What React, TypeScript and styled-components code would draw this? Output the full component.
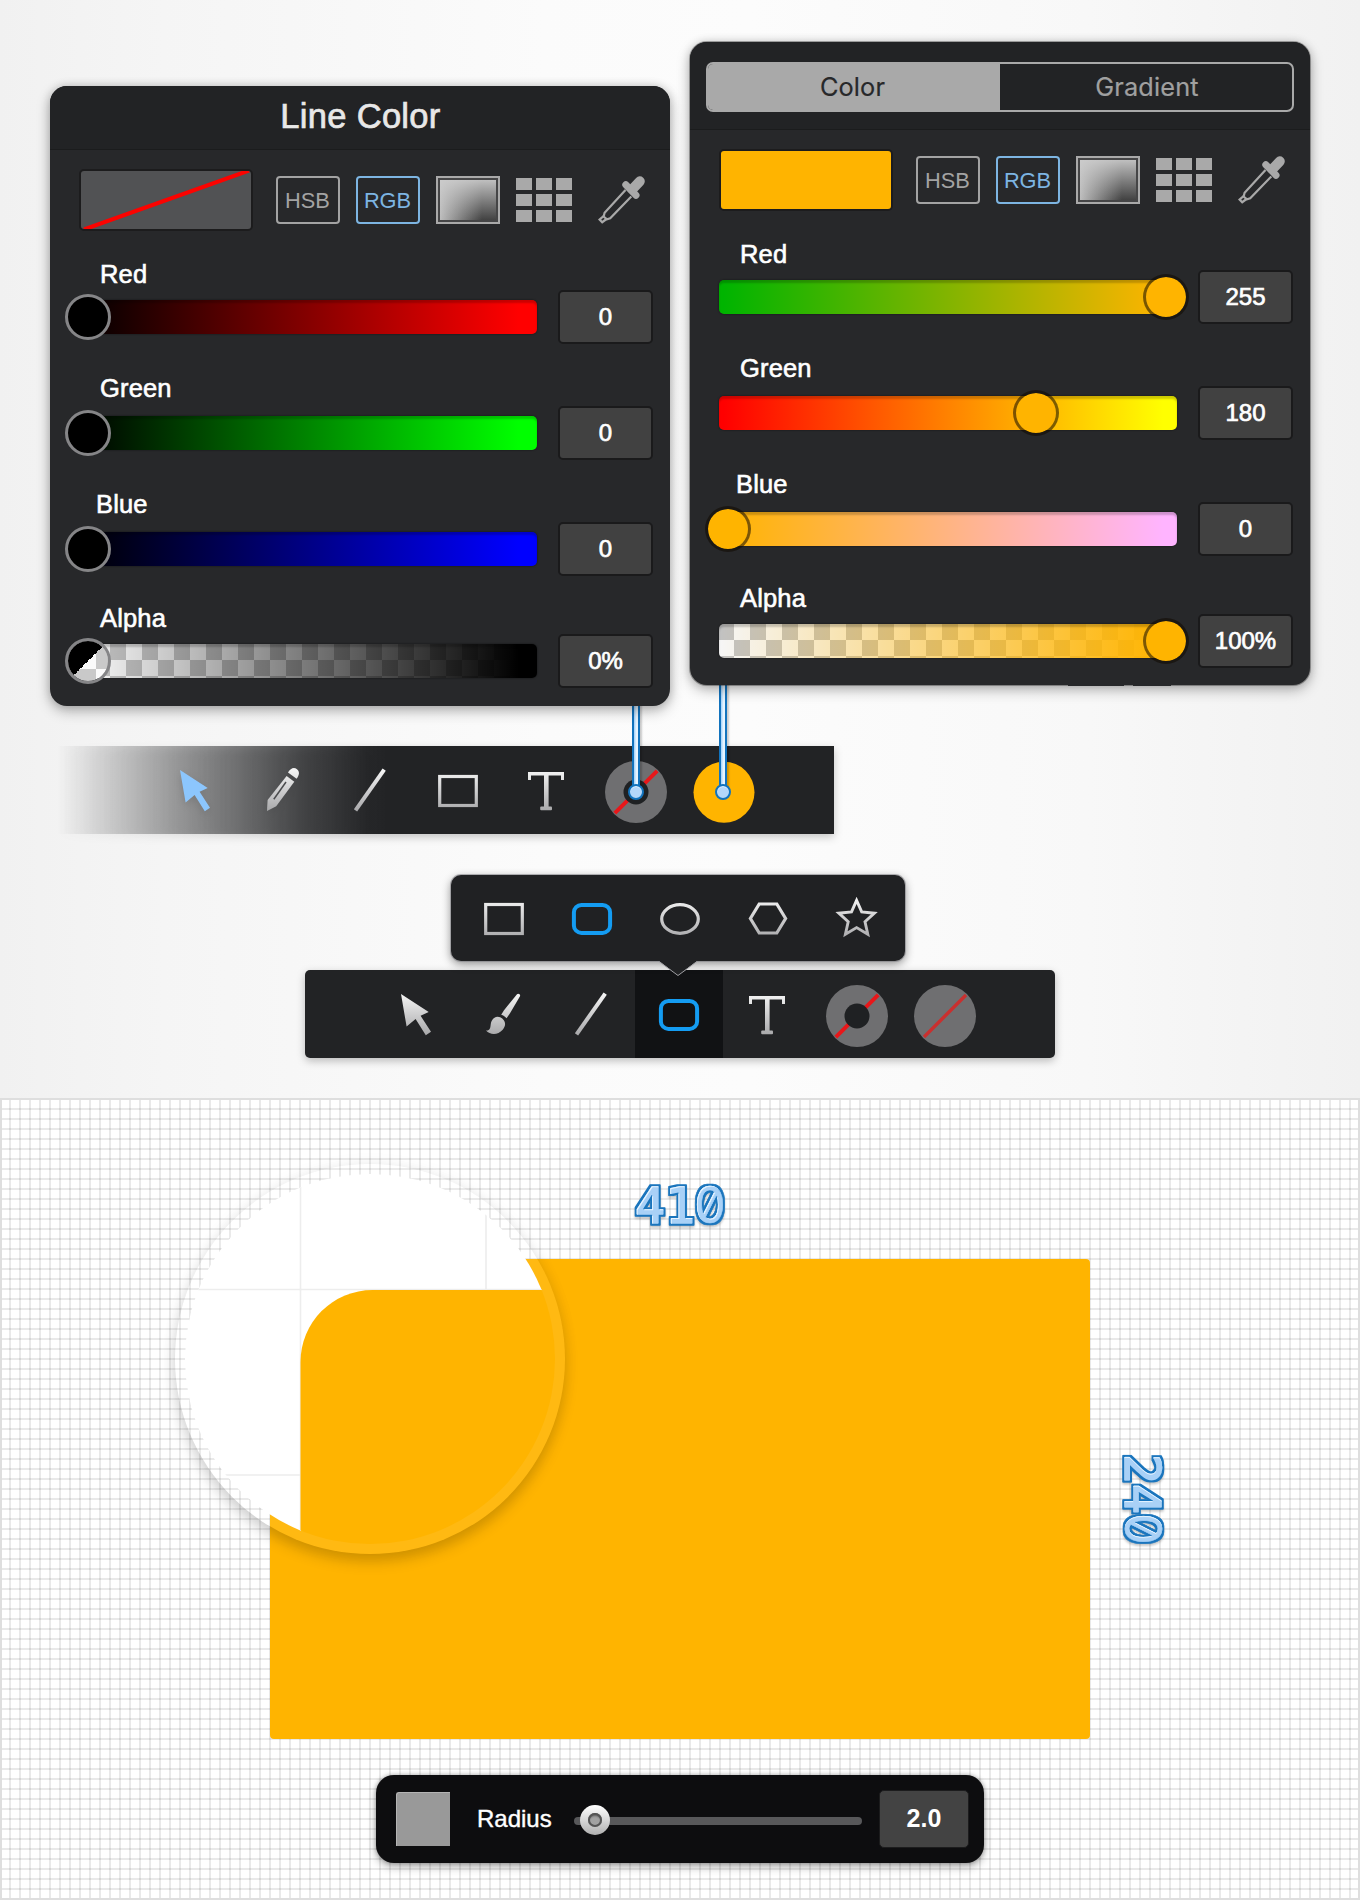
import React from 'react';
import styled, { createGlobalStyle, css } from 'styled-components';

const amber = '#ffb400';
const sans = `"Liberation Sans", Arial, sans-serif`;

const Global = createGlobalStyle`
  *, *::before, *::after { box-sizing: border-box; }
  body { margin: 0; font-family: ${sans}; }
  svg { display: block; }
`;

const Page = styled.main`
  width: 1360px;
  height: 1900px;
  overflow: hidden;
  background: #f5f5f5;
`;

const Stage = styled.section`
  position: relative;
  height: 1098px;
  background: linear-gradient(90deg, #f1f1f1 0%, #f5f5f5 12%, #fbfbfb 40%, #fcfcfc 55%, #f8f8f8 80%, #f1f1f1 100%);
`;

const PanelRow = styled.div`
  position: relative;
  z-index: 2;
  display: flex;
  align-items: flex-start;
  gap: 20px;
  height: 746px;
  padding-left: 50px;
`;

const Panel = styled.div<{ $top: number; $height: number; $edged?: boolean }>`
  position: relative;
  width: 620px;
  height: ${(p) => p.$height}px;
  margin-top: ${(p) => p.$top}px;
  background: #27282a;
  border-radius: 17px;
  box-shadow: 0 5px 14px rgba(0, 0, 0, 0.28), 0 0 10px rgba(0, 0, 0, 0.16)
    ${(p) => (p.$edged ? ', 0 0 0 1px rgba(40, 40, 40, 0.35)' : '')};
  ${(p) => p.$edged && css`
    &::after {
      content: '';
      position: absolute;
      left: 378px;
      bottom: -1px;
      width: 103px;
      height: 2px;
      background: linear-gradient(90deg, #27282a 56px, transparent 56px 65px, #27282a 65px);
    }
  `}
`;

const PanelHeader = styled.header<{ $height: number }>`
  display: flex;
  justify-content: center;
  height: ${(p) => p.$height}px;
  border-bottom: 1px solid #1b1c1d;
  border-radius: 17px 17px 0 0;
  background: #222325;
`;

const Title = styled.h1`
  margin: 10px 0 0 1px;
  font-size: 34.5px;
  font-weight: 400;
  line-height: 40px;
  letter-spacing: 0.3px;
  color: #e8e8e8;
  -webkit-text-stroke: 0.7px #e8e8e8;
`;

const Segments = styled.div`
  display: flex;
  width: 588px;
  height: 50px;
  margin-top: 20px;
  border: 2px solid #a9a9a9;
  border-radius: 7px;
  overflow: hidden;
`;

const Segment = styled.div<{ $on?: boolean }>`
  flex: 1;
  font: 400 25.3px/46px Inter, sans-serif;
  text-indent: ${(p) => (p.$on ? -3 : 2)}px;
  letter-spacing: 0.15px;
  text-align: center;
  color: ${(p) => (p.$on ? '#27282a' : '#a0a0a0')};
  -webkit-text-stroke: 0.2px currentColor;
  background: ${(p) => (p.$on ? '#a9a9a9' : 'transparent')};
`;

const Body = styled.div`
  display: flex;
  flex-direction: column;
  gap: 29px;
  padding: 19px 17px 0 29px;
`;

const Modes = styled.div`
  display: flex;
  align-items: center;
  height: 62px;
  margin-bottom: -1px;
`;

const Swatch = styled.div<{ $color: string }>`
  width: 174px;
  height: 62px;
  border: 2px solid #1c1c1d;
  border-radius: 5px;
  background: ${(p) => p.$color};
  overflow: hidden;
`;

const ModeButton = styled.button<{ $color: string; $first?: boolean }>`
  width: 64px;
  height: 48px;
  margin-left: ${(p) => (p.$first ? 23 : 16)}px;
  padding: 0 1px 0 0;
  border: 2px solid ${(p) => p.$color};
  border-radius: 4px;
  background: transparent;
  color: ${(p) => p.$color};
  font: 400 21.8px/43px ${sans};
`;

const GradientTile = styled.div`
  width: 64px;
  height: 48px;
  margin-left: 16px;
  border: 2px solid #a9a9a9;
  padding: 2px;
  background: #454546;
  &::before {
    content: '';
    display: block;
    height: 100%;
    background: linear-gradient(180deg, rgba(205, 205, 205, 0.9), rgba(120, 120, 120, 0) 100%),
      linear-gradient(90deg, #bdbdbd, #424242 75%);
  }
`;

const GridTile = styled.div`
  display: grid;
  grid-template-columns: repeat(3, 16px);
  grid-auto-rows: 12px;
  gap: 4px;
  margin-left: 16px;
  i { background: #a9a9a9; }
`;

const Dropper = styled.svg`
  width: 50px;
  height: 48px;
  margin-left: 24px;
`;

const Channel = styled.div<{ $pull?: boolean }>`
  margin-top: ${(p) => (p.$pull ? -2 : 0)}px;
`;

const ChannelName = styled.div<{ $indent: number; $gap: number }>`
  height: 30px;
  margin-bottom: ${(p) => p.$gap}px;
  padding-left: ${(p) => p.$indent}px;
  font-size: 25.5px;
  line-height: 30px;
  letter-spacing: 0.15px;
  color: #fff;
  -webkit-text-stroke: 0.6px #fff;
`;

const SliderRow = styled.div`
  display: flex;
  align-items: center;
  justify-content: space-between;
`;

const checker = (a: string, b: string) => `conic-gradient(${a} 25%, ${b} 0 50%, ${a} 0 75%, ${b} 0)`;

const Track = styled.div<{ $paint: string; $checked?: boolean }>`
  position: relative;
  width: 458px;
  height: 34px;
  border-radius: 5px;
  background: ${(p) => p.$paint};
  ${(p) => p.$checked && css`
    background: ${p.$paint}, ${checker('#f6f6f6', '#c2c2c2')} -1px 0 / 32px 32px;
  `}
  box-shadow: inset 0 3px 2px rgba(0, 0, 0, 0.2), 0 0 2px rgba(0, 0, 0, 0.6);
`;

const Knob = styled.span<{ $at: number; $fill: string; $ring: string }>`
  position: absolute;
  top: -6px;
  left: ${(p) => 9 + p.$at * 438 - 23}px;
  width: 46px;
  height: 46px;
  border: 3px solid ${(p) => p.$ring};
  border-radius: 50%;
  background: ${(p) => p.$fill};
  background-clip: padding-box;
`;

const ValueBox = styled.output`
  display: block;
  width: 95px;
  height: 54px;
  border: 2px solid #1a1a1b;
  border-radius: 5px;
  background: #414141;
  color: #fff;
  font-size: 24px;
  line-height: 50px;
  text-align: center;
  -webkit-text-stroke: 0.7px #fff;
`;

const BarBase = css`
  display: flex;
  background: #222325;
  box-shadow: 0 3px 8px rgba(0, 0, 0, 0.25);
`;

const FadedToolbar = styled.nav`
  ${BarBase}
  width: 777px;
  height: 88px;
  margin-left: 57px;
  padding-left: 93px;
  background: linear-gradient(90deg, rgba(34, 35, 37, 0) 0, rgba(34, 35, 37, 0.08) 25px, rgba(34, 35, 37, 0.2) 62px, rgba(34, 35, 37, 0.37) 113px, rgba(34, 35, 37, 0.58) 180px, rgba(34, 35, 37, 0.81) 246px, rgba(34, 35, 37, 0.98) 310px, #222325 330px);
  box-shadow: none;
  filter: drop-shadow(0 3px 4px rgba(0, 0, 0, 0.22));
`;

const Popup = styled.div`
  ${BarBase}
  position: relative;
  z-index: 2;
  width: 454px;
  height: 86px;
  margin: 41px 0 0 451px;
  padding-left: 9px;
  border-radius: 10px;
  background: #202123;
  box-shadow: 0 0 0 1px rgba(130, 130, 135, 0.55), 0 3px 10px rgba(0, 0, 0, 0.45);
`;

const PopupArrow = styled.svg`
  position: absolute;
  left: 206px;
  top: 85px;
`;

const Toolbar = styled.nav`
  ${BarBase}
  width: 750px;
  height: 88px;
  margin: 9px 0 0 305px;
  padding-left: 66px;
  border-radius: 5px;
`;

const Tool = styled.div<{ $active?: boolean }>`
  width: 88px;
  height: 88px;
  background: ${(p) => (p.$active ? '#111214' : 'transparent')};
  ${Popup} & { margin-top: -1px; }
`;

const Leader = styled.div<{ $left: number; $top: number }>`
  position: absolute;
  z-index: 1;
  left: ${(p) => p.$left}px;
  top: ${(p) => p.$top}px;
  width: 8px;
  height: ${(p) => 792 - p.$top}px;
  border: solid #1273bd;
  border-width: 0 2px;
  background: linear-gradient(90deg, #9fd0fa, #e6f4ff 60%);
  box-shadow: 2px 0 2px rgba(0, 0, 0, 0.2);
  &::after {
    content: '';
    position: absolute;
    left: -6px;
    bottom: -8px;
    width: 16px;
    height: 16px;
    border: 2px solid #1273bd;
    border-radius: 50%;
    background: #b4d7fa;
    box-shadow: inset 0 1px 0 #e2f1ff;
  }
`;

const Canvas = styled.section`
  position: relative;
  height: 802px;
  background:
    linear-gradient(#dedede, #dedede) 0 0 / 100% 2px no-repeat,
    linear-gradient(#dedede, #dedede) 0 100% / 100% 2px no-repeat,
    linear-gradient(90deg, #dedede, #dedede) 0 0 / 2px 100% no-repeat,
    linear-gradient(90deg, #dedede, #dedede) 100% 0 / 2px 100% no-repeat,
    linear-gradient(90deg, rgba(0, 0, 0, 0.085) 2px, transparent 2px) -1px 0 / 10px 10px,
    linear-gradient(rgba(0, 0, 0, 0.085) 2px, transparent 2px) 0 0 / 10px 10px,
    #fff;
`;

const Shape = styled.div`
  position: absolute;
  left: 270px;
  top: 161px;
  width: 820px;
  height: 480px;
  border-radius: 4px;
  background: ${amber};
`;

const Lens = styled.div`
  position: absolute;
  left: 175px;
  top: 66px;
  width: 390px;
  height: 390px;
  padding: 10px;
  border-radius: 50%;
  background: rgba(255, 255, 255, 0.07);
  box-shadow: 0 8px 14px rgba(0, 0, 0, 0.17), 0 0 16px rgba(0, 0, 0, 0.05);
`;

const Dimension = styled.svg<{ $left: number; $top: number; $turn?: boolean }>`
  position: absolute;
  left: ${(p) => p.$left}px;
  top: ${(p) => p.$top}px;
  width: 110px;
  height: 60px;
  overflow: visible;
  transform: ${(p) => (p.$turn ? 'rotate(90deg)' : 'none')};
  filter: drop-shadow(${(p) => (p.$turn ? '2px 0' : '0 2px')} 1px rgba(0, 0, 0, 0.22));
  font: 50px "DejaVu Sans Mono", monospace;
  text-anchor: middle;
  stroke-linejoin: round;
`;

const SlashedZero = styled.tspan`
  font-family: Inter, sans-serif;
  font-size: 50px;
  font-feature-settings: "zero" 1, "tnum" 1;
`;

const RadiusBar = styled.div`
  position: absolute;
  left: 376px;
  top: 677px;
  display: flex;
  align-items: center;
  width: 608px;
  height: 88px;
  padding: 0 15px 0 20px;
  border-radius: 18px;
  background: #0d0d0f;
  box-shadow: 0 4px 9px rgba(0, 0, 0, 0.3), 0 0 4px rgba(0, 0, 0, 0.3);
`;

const Preview = styled.div`
  width: 54px;
  height: 54px;
  border: solid #b4b4b4;
  border-width: 1px 0 0 1px;
  border-radius: 3px 0 0 0;
  background: #999;
`;

const RadiusLabel = styled.label`
  width: 98px;
  padding-left: 27px;
  font-size: 24px;
  line-height: 30px;
  white-space: nowrap;
  color: #fff;
  -webkit-text-stroke: 0.4px #fff;
`;

const Rail = styled.div`
  position: relative;
  width: 288px;
  height: 8px;
  margin: 4px 17px 0 26px;
  border-radius: 4px;
  background: #58585a;
`;

const RailKnob = styled.span`
  position: absolute;
  left: 6px;
  top: -12px;
  width: 30px;
  height: 30px;
  border-radius: 50%;
  background: linear-gradient(#fff, #b0b0b0);
  &::after {
    content: '';
    position: absolute;
    inset: 8px;
    border-radius: 50%;
    background: #a2a2a2;
    box-shadow: inset 0 0 0 2px #555, inset 0 3px 2px rgba(0, 0, 0, 0.4);
  }
`;

const RadiusValue = styled.output`
  width: 90px;
  height: 58px;
  border: 1px solid #1c1c1d;
  border-radius: 5px;
  background: #434343;
  color: #fff;
  font-size: 25px;
  font-weight: 700;
  line-height: 55px;
  text-align: center;
`;

function Silver() {
  return (
    <defs>
      <linearGradient id="silver" gradientUnits="userSpaceOnUse" x1="0" y1="24" x2="0" y2="65">
        <stop offset="0" stopColor="#f4f4f4" />
        <stop offset="1" stopColor="#a8a8aa" />
      </linearGradient>
    </defs>
  );
}

const silver = 'url(#silver)';

type IconName =
  | 'pointer' | 'pencil' | 'brush' | 'line' | 'rect' | 'rounded' | 'ellipse'
  | 'hexagon' | 'star' | 'text' | 'stroke' | 'nofill' | 'fill';

function Icon({ name, tint = silver }: { name: IconName; tint?: string }) {
  return (
    <svg width="88" height="88" viewBox="0 0 88 88" fill="none">
      <Silver />
      {name === 'pointer' && <path fill={tint} d="M30 24 57.7 42 49.6 45.8 60 61.8 54.8 65.2 44.6 49 35.6 56.6Z" />}
      {name === 'pencil' && (
        <g fill={tint}>
          <path d="M29 65 29.6 54 48.6 30 56.3 35.7 38.2 60.2Z" />
          <path d="M50 26.6C52.6 22 56 20.8 59 23.2 62 25.8 61.3 29 58.6 32.8Z" />
          <path d="M35.8 53.2 48 36" stroke="#4b4c4e" strokeWidth="1.5" />
        </g>
      )}
      {name === 'brush' && (
        <g fill={tint}>
          <path d="M58 24.2C59.2 22.9 61.8 24.2 61 26.2L51 43.2 47.6 48.2C45.8 46.6 44.5 45.6 42.2 44.8L45 40.2Z" />
          <path d="M27 60.5C31 60.8 31.3 58.3 31.7 54.5 32.4 48.5 37 45.4 41.2 47.2 46.4 49.6 47.8 55.2 43.7 59.8 39 65.3 31 65.2 27 60.5Z" />
        </g>
      )}
      {name === 'line' && <path d="M58.2 23.7 29.5 64.3" stroke={tint} strokeWidth="4" />}
      {name === 'rect' && <rect x="25.7" y="30.5" width="36.6" height="29" stroke={tint} strokeWidth="3.2" />}
      {name === 'rounded' && <rect x="25.9" y="30.9" width="36.2" height="28" rx="7.5" stroke="#149cf2" strokeWidth="4" />}
      {name === 'ellipse' && <ellipse cx="44" cy="45" rx="18.3" ry="14.3" stroke={tint} strokeWidth="3.2" />}
      {name === 'hexagon' && <path d="M35.2 30H52.8L61.6 44.5 52.8 59H35.2L26.4 44.5Z" stroke={tint} strokeWidth="3.2" />}
      {name === 'star' && (
        <path d="M44.6 26.4 49.7 37.9 62.4 39.2 53 47.7 55.8 60.2 44.6 53.6 33.4 60.2 36.2 47.7 26.8 39.2 39.5 37.9Z" stroke={tint} strokeWidth="2.9" />
      )}
      {name === 'text' && (
        <g fill={tint}>
          <rect x="26" y="26" width="36" height="3.5" />
          <rect x="26" y="26" width="3" height="8" />
          <rect x="59" y="26" width="3" height="8" />
          <rect x="42" y="28" width="4.6" height="34" />
          <rect x="38.2" y="60.5" width="11.8" height="3.8" rx="1" />
        </g>
      )}
      {name === 'stroke' && (
        <g>
          <circle cx="46" cy="46" r="31" fill="#6f6f71" />
          <path d="M24.8 67.2 67.2 24.8" stroke="#e8171a" strokeWidth="4" />
          <circle cx="46" cy="46" r="12.5" fill="#1f2123" />
        </g>
      )}
      {name === 'nofill' && (
        <g>
          <circle cx="46" cy="46" r="31" fill="#6f6f71" />
          <path d="M25 67 67 25" stroke="#c9302f" strokeWidth="3.4" />
        </g>
      )}
      {name === 'fill' && <circle cx="46" cy="46.3" r="30.5" fill={amber} />}
    </svg>
  );
}

type ChannelSpec = { name: string; paint: string; at: number; value: string; knob?: string };

const lineChannels: ChannelSpec[] = [
  { name: 'Red', paint: 'linear-gradient(90deg, #000, #f00 96%)', at: 0, value: '0' },
  { name: 'Green', paint: 'linear-gradient(90deg, #000, #0f0 96%)', at: 0, value: '0' },
  { name: 'Blue', paint: 'linear-gradient(90deg, #000, #00f 96%)', at: 0, value: '0' },
  {
    name: 'Alpha',
    paint: 'linear-gradient(90deg, rgba(0,0,0,0) 2%, #000 96%)',
    at: 0,
    value: '0%',
    knob: `linear-gradient(135deg, #000 50%, transparent 50%), ${checker('#c9c9c9', '#fafafa')} 3px 3px / 50px 50px`,
  },
];

const fillChannels: ChannelSpec[] = [
  { name: 'Red', paint: `linear-gradient(90deg, #00b400 1%, ${amber} 97%)`, at: 1, value: '255' },
  { name: 'Green', paint: 'linear-gradient(90deg, #f00 1%, #ff0 97%)', at: 0.704, value: '180' },
  { name: 'Blue', paint: `linear-gradient(90deg, ${amber} 1%, #ffb4ff 97%)`, at: 0, value: '0' },
  { name: 'Alpha', paint: 'linear-gradient(90deg, rgba(255,180,0,0) 0, #ffb400 97%)', at: 1, value: '100%' },
];

function ColorBody({ channels, swatch, knob, ring, empty }: {
  channels: ChannelSpec[]; swatch: string; knob: string; ring: string; empty?: boolean;
}) {
  return (
    <Body>
      <Modes>
        <Swatch $color={swatch}>
          {empty && (
            <svg width="170" height="58" viewBox="0 0 170 58">
              <path d="M3 58.5 168 -0.5" stroke="#fb0300" strokeWidth="4" />
            </svg>
          )}
        </Swatch>
        <ModeButton $color="#a3a3a3" $first>HSB</ModeButton>
        <ModeButton $color="#7db5e2">RGB</ModeButton>
        <GradientTile />
        <GridTile>{Array.from({ length: 9 }, (_, i) => <i key={i} />)}</GridTile>
        <Dropper viewBox="0 0 50 48" fill="none" stroke="#a9a9a9">
          <path d="M43.8 5.3 36.5 13.2" strokeWidth="10" strokeLinecap="round" />
          <path d="M29.8 8.8 40 19.2" strokeWidth="7" strokeLinecap="round" />
          <path d="M29.5 14 8.6 36.8 7.6 40.6 11 43.3 14.2 42.3 35.3 20.5" strokeWidth="2.2" />
          <path d="M7.6 40 3.6 43.6 6.2 46.2 10.5 43" strokeWidth="2.2" />
        </Dropper>
      </Modes>
      {channels.map((c) => {
        const alpha = c.name === 'Alpha';
        return (
          <Channel key={c.name} $pull={alpha}>
            <ChannelName $indent={c.name === 'Blue' ? 17 : 21} $gap={c.name === 'Green' || c.name === 'Blue' ? 3 : 1}>
              {c.name}
            </ChannelName>
            <SliderRow>
              <Track $paint={c.paint} $checked={alpha}>
                <Knob $at={c.at} $fill={c.knob ?? knob} $ring={ring} />
              </Track>
              <ValueBox>{c.value}</ValueBox>
            </SliderRow>
          </Channel>
        );
      })}
    </Body>
  );
}

function DimensionText({ value, left, top, turn }: { value: string; left: number; top: number; turn?: boolean }) {
  const shine = turn ? { dx: 1.3, dy: -0.5 } : { dx: 0.5, dy: 1.3 };
  const id = `outline-${value}`;
  return (
    <Dimension $left={left} $top={top} $turn={turn} viewBox="0 0 110 60">
      <filter id={id} x="-20%" y="-20%" width="140%" height="140%" colorInterpolationFilters="sRGB">
        <feMorphology in="SourceAlpha" operator="dilate" radius="1.5" result="wide" />
        <feGaussianBlur in="wide" stdDeviation="0.4" result="soft" />
        <feFlood floodColor="#1a75bd" />
        <feComposite in2="soft" operator="in" result="edge" />
        <feOffset in="SourceAlpha" dx={shine.dx} dy={shine.dy} result="moved" />
        <feFlood floodColor="#e8f4ff" />
        <feComposite in2="SourceAlpha" operator="in" />
        <feComposite in2="moved" operator="out" result="shine" />
        <feMerge>
          <feMergeNode in="edge" />
          <feMergeNode in="SourceGraphic" />
          <feMergeNode in="shine" />
        </feMerge>
      </filter>
      <g filter={`url(#${id})`} fill="#a9d1f7" stroke="#a9d1f7" strokeWidth="1.6">
        <text y="47.5">
          {value.split('').map((digit, i) => {
            const x = 25 + i * 30;
            return digit === '0'
              ? <SlashedZero key={i} x={x} strokeWidth="0.6">{digit}</SlashedZero>
              : <tspan key={i} x={x}>{digit}</tspan>;
          })}
        </text>
      </g>
    </Dimension>
  );
}

export default function App() {
  return (
    <Page>
      <Global />
      <Stage>
        <PanelRow>
          <Panel $top={86} $height={620}>
            <PanelHeader $height={64}><Title>Line Color</Title></PanelHeader>
            <ColorBody channels={lineChannels} swatch="#515254" knob="#000" ring="#858587" empty />
          </Panel>
          <Panel $top={42} $height={643} $edged>
            <PanelHeader $height={88}>
              <Segments>
                <Segment $on>Color</Segment>
                <Segment>Gradient</Segment>
              </Segments>
            </PanelHeader>
            <ColorBody channels={fillChannels} swatch={amber} knob={amber} ring="rgba(16, 10, 0, 0.55)" />
          </Panel>
        </PanelRow>
        <FadedToolbar>
          <Tool><Icon name="pointer" tint="#8cc6fd" /></Tool>
          <Tool><Icon name="pencil" /></Tool>
          <Tool><Icon name="line" /></Tool>
          <Tool><Icon name="rect" /></Tool>
          <Tool><Icon name="text" /></Tool>
          <Tool><Icon name="stroke" /></Tool>
          <Tool><Icon name="fill" /></Tool>
        </FadedToolbar>
        <Leader $left={632} $top={700} />
        <Leader $left={719} $top={680} />
        <Popup>
          <Tool><Icon name="rect" /></Tool>
          <Tool><Icon name="rounded" /></Tool>
          <Tool><Icon name="ellipse" /></Tool>
          <Tool><Icon name="hexagon" /></Tool>
          <Tool><Icon name="star" /></Tool>
          <PopupArrow width="42" height="18" viewBox="0 0 42 18">
            <path d="M0 0H42L40 1 21 15.5 2 1Z" fill="#202123" />
            <path d="M2 1.5 21 15.5 40 1.5" fill="none" stroke="#a0a0a4" />
          </PopupArrow>
        </Popup>
        <Toolbar>
          <Tool><Icon name="pointer" /></Tool>
          <Tool><Icon name="brush" /></Tool>
          <Tool><Icon name="line" /></Tool>
          <Tool $active><Icon name="rounded" /></Tool>
          <Tool><Icon name="text" /></Tool>
          <Tool><Icon name="stroke" /></Tool>
          <Tool><Icon name="nofill" /></Tool>
        </Toolbar>
      </Stage>
      <Canvas>
        <Shape />
        <Lens>
          <svg width="370" height="370" viewBox="0 0 370 370">
            <clipPath id="lens"><circle cx="185" cy="185" r="185" /></clipPath>
            <g clipPath="url(#lens)">
              <path d="M0 0H370V116H200V200H116V370H0Z" fill="#fff" />
              <path d="M115.5 0V370M301 0V116M0 115.5H370M0 301H116" stroke="#ededed" strokeWidth="1.6" />
              <path d="M115.5 370V188A72 72 0 0 1 187.5 116H370V370Z" fill={amber} />
            </g>
          </svg>
        </Lens>
        <DimensionText value="410" left={625} top={77} />
        <DimensionText value="240" left={1088} top={371} turn />
        <RadiusBar>
          <Preview />
          <RadiusLabel>Radius</RadiusLabel>
          <Rail><RailKnob /></Rail>
          <RadiusValue>2.0</RadiusValue>
        </RadiusBar>
      </Canvas>
    </Page>
  );
}
